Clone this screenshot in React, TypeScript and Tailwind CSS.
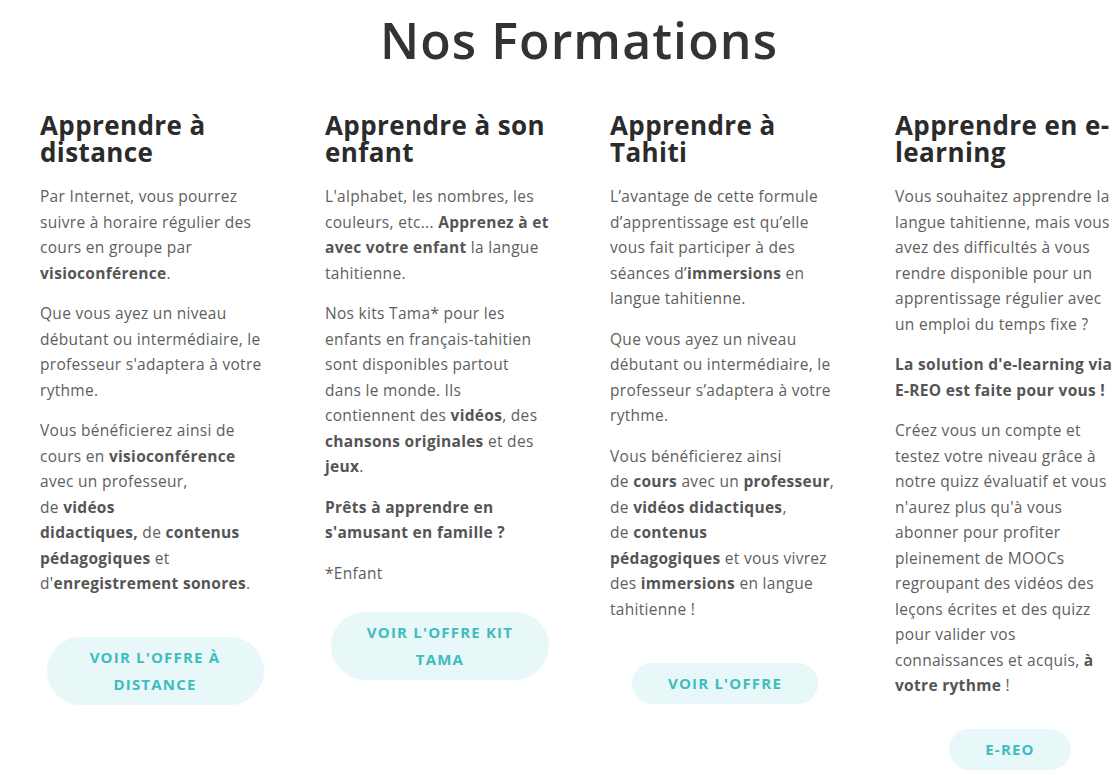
import React from 'react';

const B: React.FC<{ children: React.ReactNode }> = ({ children }) => (
  <strong className="font-bold text-[#555]">{children}</strong>
);

type Col = {
  title: React.ReactNode;
  body: React.ReactNode;
  button: React.ReactNode;
  btnClass: string;
};

const columns: Col[] = [
  {
    title: (
      <>
        Apprendre à<br />distance
      </>
    ),
    body: (
      <>
        <p className="mb-[15px]">
          Par Internet, vous pourrez<br />suivre à horaire régulier des<br />cours en groupe par<br />
          <B>visioconférence</B>.
        </p>
        <p className="mb-[15px]">
          Que vous ayez un niveau<br />débutant ou intermédiaire, le<br />professeur s'adaptera à votre<br />rythme.
        </p>
        <p>
          Vous bénéficierez ainsi de<br />cours en <B>visioconférence</B>
          <br />avec un professeur,<br />de <B>vidéos</B>
          <br />
          <B>didactiques,</B> de <B>contenus</B>
          <br />
          <B>pédagogiques</B> et<br />d'<B>enregistrement sonores</B>.
        </p>
      </>
    ),
    button: (
      <>
        Voir l'offre à<br />distance
      </>
    ),
    btnClass: 'mt-[40px] w-[217px]',
  },
  {
    title: (
      <>
        Apprendre à son<br />enfant
      </>
    ),
    body: (
      <>
        <p className="mb-[15px]">
          L'alphabet, les nombres, les<br />couleurs, etc... <B>Apprenez à et</B>
          <br />
          <B>avec votre enfant</B> la langue<br />tahitienne.
        </p>
        <p className="mb-[15px]">
          Nos kits Tama* pour les<br />enfants en français-tahitien<br />sont disponibles partout<br />dans le monde. Ils<br />
          contiennent des <B>vidéos</B>, des<br />
          <B>chansons originales</B> et des<br />
          <B>jeux</B>.
        </p>
        <p className="mb-[15px]">
          <B>
            Prêts à apprendre en<br />s'amusant en famille ?
          </B>
        </p>
        <p>*Enfant</p>
      </>
    ),
    button: (
      <>
        Voir l'offre kit<br />Tama
      </>
    ),
    btnClass: 'mt-[26px] w-[218px]',
  },
  {
    title: (
      <>
        Apprendre à<br />Tahiti
      </>
    ),
    body: (
      <>
        <p className="mb-[15px]">
          L’avantage de cette formule<br />d’apprentissage est qu’elle<br />vous fait participer à des<br />
          séances d’<B>immersions</B> en<br />langue tahitienne.
        </p>
        <p className="mb-[15px]">
          Que vous ayez un niveau<br />débutant ou intermédiaire, le<br />professeur s’adaptera à votre<br />rythme.
        </p>
        <p>
          Vous bénéficierez ainsi<br />de <B>cours</B> avec un <B>professeur</B>,<br />
          de <B>vidéos didactiques</B>,<br />de <B>contenus</B>
          <br />
          <B>pédagogiques</B> et vous vivrez<br />des <B>immersions</B> en langue<br />tahitienne !
        </p>
      </>
    ),
    button: <>Voir l'offre</>,
    btnClass: 'mt-[41px] px-[36px]',
  },
  {
    title: (
      <>
        Apprendre en e-<br />learning
      </>
    ),
    body: (
      <>
        <p className="mb-[15px]">
          Vous souhaitez apprendre la<br />langue tahitienne, mais vous<br />avez des difficultés à vous<br />
          rendre disponible pour un<br />apprentissage régulier avec<br />un emploi du temps fixe ?
        </p>
        <p className="mb-[15px]">
          <B>
            La solution d'e-learning via<br />E-REO est faite pour vous !
          </B>
        </p>
        <p>
          Créez vous un compte et<br />testez votre niveau grâce à<br />notre quizz évaluatif et vous<br />
          n'aurez plus qu'à vous<br />abonner pour profiter<br />pleinement de MOOCs<br />
          regroupant des vidéos des<br />leçons écrites et des quizz<br />pour valider vos<br />
          connaissances et acquis, <B>à</B>
          <br />
          <B>votre rythme</B> !
        </p>
      </>
    ),
    button: <>E-REO</>,
    btnClass: 'mt-[30px] px-[36px]',
  },
];

const App: React.FC = () => {
  return (
    <div className="w-full min-h-[776px] overflow-hidden bg-white font-['Open_Sans',sans-serif]">
      <div className="w-[1158px] pt-[10px]">
        <h1 className="text-center text-[50px] leading-[60px] font-semibold text-[#333] tracking-[1.1px]">
          Nos Formations
        </h1>

        <div className="mt-[42px] pl-[40px] flex gap-[55px]">
          {columns.map((col, i) => (
            <div key={i} className="w-[230px] shrink-0 flex flex-col">
              <h2 className="text-[26px] leading-[27px] font-bold text-[#2b2b2b] tracking-[0.4px] whitespace-nowrap">
                {col.title}
              </h2>
              <div className="mt-[18px] text-[15.5px] leading-[25.5px] tracking-[0.3px] text-[#5e5e5e] whitespace-nowrap">
                {col.body}
              </div>
              <div className="flex justify-center">
                <a
                  href="#"
                  className={`${col.btnClass} block rounded-full bg-[#e8f7f7] py-[7px] text-center text-[15px] leading-[27px] font-bold uppercase tracking-[1.2px] text-[#3dbdc0] whitespace-nowrap`}
                >
                  {col.button}
                </a>
              </div>
            </div>
          ))}
        </div>
      </div>
    </div>
  );
};

export default App;
